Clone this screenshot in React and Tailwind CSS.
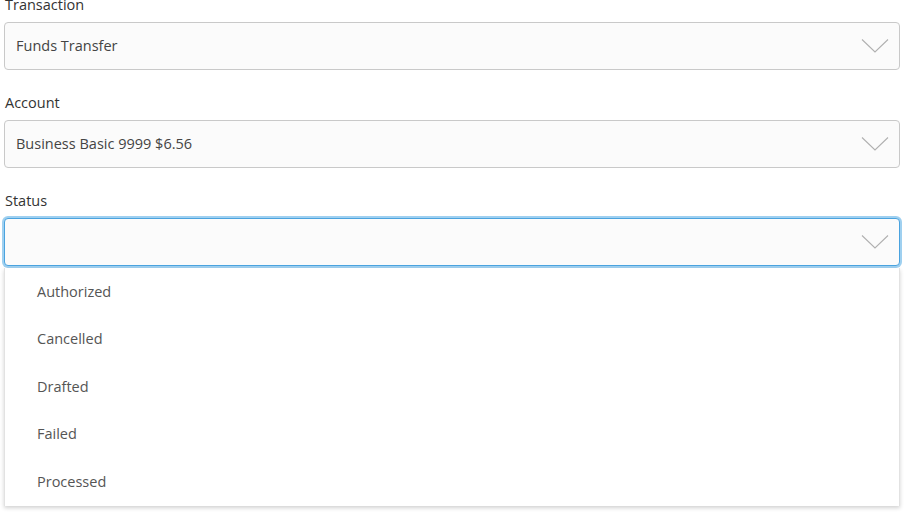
import React from 'react';

const Chevron = () => (
  <svg width="28" height="16" viewBox="0 0 28 16" fill="none" className="shrink-0">
    <path d="M1 1.5 L14 14 L27 1.5" stroke="#b0b0b0" strokeWidth="1.1" />
  </svg>
);

function Field({ label, value, focused, children }) {
  return (
    <div className="relative mb-[24px]">
      <div className="text-[14.5px] leading-[18px] mb-[8px] text-[#333] pl-[1px]">{label}</div>
      <div
        className={
          'h-[48px] flex items-center justify-between rounded-[4px] bg-[#fbfbfb] pl-[11px] pr-[10px] border ' +
          (focused
            ? 'border-[#4aa3df] shadow-[0_0_0_2px_#9fd0f0]'
            : 'border-[#c9c9c9]')
        }
      >
        <span className="text-[14.5px] text-[#444]">{value}</span>
        <Chevron />
      </div>
      {children}
    </div>
  );
}

export default function App() {
  const statuses = ['Authorized', 'Cancelled', 'Drafted', 'Failed', 'Processed'];
  return (
    <div
      className="w-[904px] h-[512px] bg-white overflow-hidden pl-[4px] pr-[4px]"
      style={{ fontFamily: '"Open Sans", sans-serif' }}
    >
      <div className="mt-[-4px]">
        <Field label="Transaction" value="Funds Transfer" />
        <Field label="Account" value="Business Basic 9999 $6.56" />
        <Field label="Status" value="" focused>
          <div className="absolute left-0 right-0 top-[76px] bg-white border-l border-r border-[#e2e2e2] shadow-[0_2px_4px_rgba(0,0,0,0.18)]">
            {statuses.map((s) => (
              <div key={s} className="h-[47.5px] flex items-center pl-[32px] text-[14.5px] text-[#555]">
                {s}
              </div>
            ))}
          </div>
        </Field>
      </div>
    </div>
  );
}
